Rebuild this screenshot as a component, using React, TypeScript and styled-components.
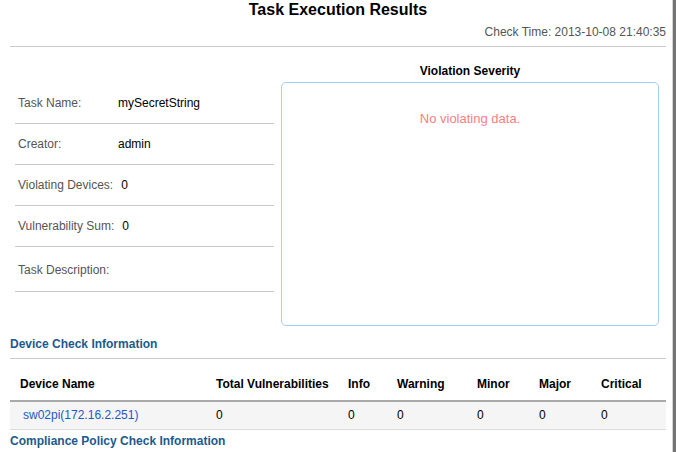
import React from "react";
import styled, { createGlobalStyle } from "styled-components";

const Global = createGlobalStyle`
  html, body { margin: 0; padding: 0; background: #fff; }
  body { font-family: "Liberation Sans", Arial, sans-serif; font-size: 12px; color: #000; }
`;

const Frame = styled.div`
  width: 676px;
  height: 452px;
  box-sizing: border-box;
  border-right: 3px solid #747474;
  overflow: hidden;
`;

const Page = styled.div`
  height: 100%;
  box-sizing: border-box;
  border-right: 1px solid #d4d4d4;
  padding: 0 6px 0 10px;
`;

const Title = styled.h1`
  margin: 0;
  font-size: 16px;
  line-height: 20px;
  font-weight: bold;
  text-align: center;
`;

const CheckTime = styled.div`
  margin-top: 4px;
  padding-bottom: 6px;
  line-height: 16px;
  text-align: right;
  color: #555;
  border-bottom: 1px solid #cbcbcb;
`;

const Overview = styled.div`
  display: flex;
  align-items: flex-start;
  gap: 7px;
  padding-left: 5px;
  padding-top: 16px;
`;

const InfoList = styled.div`
  width: 259px;
  margin-top: 20px;
  display: flex;
  flex-direction: column;
`;

const InfoRow = styled.div<{ $tall?: boolean }>`
  display: flex;
  align-items: ${(p) => (p.$tall ? "flex-start" : "center")};
  box-sizing: border-box;
  height: ${(p) => (p.$tall ? 45 : 41)}px;
  padding: ${(p) => (p.$tall ? "15px 0 0 3px" : "0 0 0 3px")};
  line-height: 16px;
  border-bottom: 1px solid #c8c8c8;
`;

const Label = styled.span`
  display: inline-block;
  min-width: 92px;
  margin-right: 8px;
  color: #555;
`;

const Value = styled.span`
  color: #000;
`;

const ChartColumn = styled.div`
  width: 378px;
  display: flex;
  flex-direction: column;
`;

const ChartTitle = styled.div`
  font-weight: bold;
  line-height: 16px;
  text-align: center;
  margin-bottom: 3px;
`;

const ChartBox = styled.div`
  box-sizing: border-box;
  height: 244px;
  border: 1px solid #a4cdf3;
  border-radius: 5px;
  padding-top: 28px;
  text-align: center;
`;

const NoData = styled.div`
  font-size: 13px;
  line-height: 16px;
  color: #f77f7f;
`;

const SectionHeader = styled.div<{ $rule?: boolean }>`
  margin-top: ${(p) => (p.$rule ? 10 : 3)}px;
  padding-bottom: ${(p) => (p.$rule ? 6 : 0)}px;
  font-weight: bold;
  line-height: 16px;
  color: #1b5a8c;
  border-bottom: ${(p) => (p.$rule ? "1px solid #cbcbcb" : "none")};
`;

const GridRow = styled.div<{ $head?: boolean }>`
  display: grid;
  grid-template-columns: 196px 132px 49px 80px 62px 62px 1fr;
  line-height: 16px;
  ${(p) =>
    p.$head
      ? `font-weight: bold; padding: 17px 0 8px; border-bottom: 2px solid #a9a9a9;`
      : `background: #f5f5f5; padding: 5px 0 6px; border-bottom: 1px solid #dcdcdc;`}
`;

const Cell = styled.div`
  padding-left: 10px;
  white-space: nowrap;
`;

const DeviceLink = styled.a`
  margin-left: 3px;
  color: #2458c6;
  text-decoration: none;
`;

const columns = ["Device Name", "Total Vulnerabilities", "Info", "Warning", "Minor", "Major", "Critical"];

const info: { label: string; value: string; tall?: boolean }[] = [
  { label: "Task Name:", value: "mySecretString" },
  { label: "Creator:", value: "admin" },
  { label: "Violating Devices:", value: "0" },
  { label: "Vulnerability Sum:", value: "0" },
  { label: "Task Description:", value: "", tall: true },
];

export default function App() {
  return (
    <>
      <Global />
      <Frame>
        <Page>
          <Title>Task Execution Results</Title>
          <CheckTime>Check Time: 2013-10-08 21:40:35</CheckTime>
          <Overview>
            <InfoList>
              {info.map((r) => (
                <InfoRow key={r.label} $tall={r.tall}>
                  <Label>{r.label}</Label>
                  <Value>{r.value}</Value>
                </InfoRow>
              ))}
            </InfoList>
            <ChartColumn>
              <ChartTitle>Violation Severity</ChartTitle>
              <ChartBox>
                <NoData>No violating data.</NoData>
              </ChartBox>
            </ChartColumn>
          </Overview>
          <SectionHeader $rule>Device Check Information</SectionHeader>
          <GridRow $head>
            {columns.map((c) => (
              <Cell key={c}>{c}</Cell>
            ))}
          </GridRow>
          <GridRow>
            <Cell>
              <DeviceLink href="#">sw02pi(172.16.2.251)</DeviceLink>
            </Cell>
            {["0", "0", "0", "0", "0", "0"].map((v, i) => (
              <Cell key={i}>{v}</Cell>
            ))}
          </GridRow>
          <SectionHeader>Compliance Policy Check Information</SectionHeader>
        </Page>
      </Frame>
    </>
  );
}
